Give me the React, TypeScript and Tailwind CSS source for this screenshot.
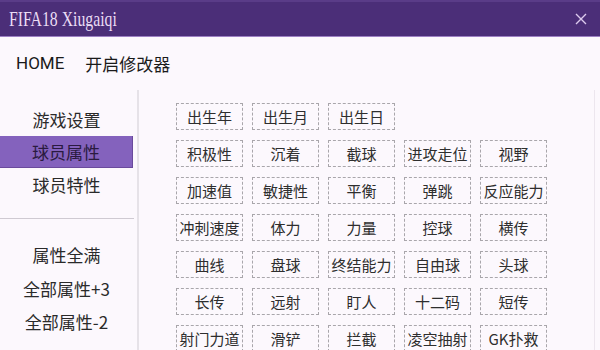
const rows: string[][] = [
  ["出生年", "出生月", "出生日"],
  ["积极性", "沉着", "截球", "进攻走位", "视野"],
  ["加速值", "敏捷性", "平衡", "弹跳", "反应能力"],
  ["冲刺速度", "体力", "力量", "控球", "横传"],
  ["曲线", "盘球", "终结能力", "自由球", "头球"],
  ["长传", "远射", "盯人", "十二码", "短传"],
  ["射门力道", "滑铲", "拦截", "凌空抽射", "GK扑救"],
];

const cjk = "font-['Noto_Sans_CJK_SC','Noto_Sans',sans-serif]";

export default function App() {
  return (
    <div className={`w-[600px] h-[350px] overflow-hidden bg-[#fcf8fd] flex flex-col ${cjk}`}>
      {/* title bar */}
      <div className="h-[37px] shrink-0 bg-[#4b2e78] border-t-2 border-t-[#5a3c88] border-b border-b-[#9d80c4] flex items-center justify-between pl-[9px] pr-[13px]">
        <span className="inline-block origin-left scale-x-75 font-['Liberation_Serif',serif] text-[21px] text-[#eadcf4] leading-none whitespace-nowrap">
          FIFA18 Xiugaiqi
        </span>
        <svg width="12" height="12" viewBox="0 0 12 12" className="text-[#dccaee]">
          <path d="M1 1 L11 11 M11 1 L1 11" stroke="currentColor" strokeWidth="1.4" fill="none" />
        </svg>
      </div>

      {/* menu */}
      <div className="h-[53px] shrink-0 flex items-center gap-[21px] pl-[16px] text-[17px] text-[#1a1a1a]">
        <span className="font-['Roboto',sans-serif]">HOME</span>
        <span>开启修改器</span>
      </div>

      <div className="flex flex-1 min-h-0 border-r border-r-[#ece6ee] mr-[5px]">
        {/* sidebar */}
        <div className="w-[139px] shrink-0 border-r-2 border-r-[#e6e2e8] pt-[13px] text-[17px] text-[#2a2a2a]">
          <div className="pr-[4px]">
            <div className="h-[33px] flex items-center justify-center">游戏设置</div>
            <div className="h-[32px] flex items-center justify-center bg-[#8462bd] border-r border-b border-[#6a4a9c] text-[#2a1a40]">球员属性</div>
            <div className="h-[33px] flex items-center justify-center">球员特性</div>
          </div>
          <div className="mt-[17px] mr-[3px] border-t border-[#cfcad2]" />
          <div className="pt-[19px] pr-[4px]">
            <div className="h-[34px] flex items-center justify-center">属性全满</div>
            <div className="h-[33px] flex items-center justify-center">全部属性+3</div>
            <div className="h-[33px] flex items-center justify-center">全部属性-2</div>
          </div>
        </div>

        {/* grid */}
        <div className="pl-[37px] pt-[13px] flex flex-col gap-[10px]">
          {rows.map((r, i) => (
            <div key={i} className="flex gap-[9px]">
              {r.map((t) => (
                <div
                  key={t}
                  className="w-[67px] h-[27px] border border-dashed border-[#a9a6ab] flex items-center justify-center text-[15px] text-[#2e2e2e] leading-none"
                >
                  {t}
                </div>
              ))}
            </div>
          ))}
        </div>
      </div>
    </div>
  );
}
